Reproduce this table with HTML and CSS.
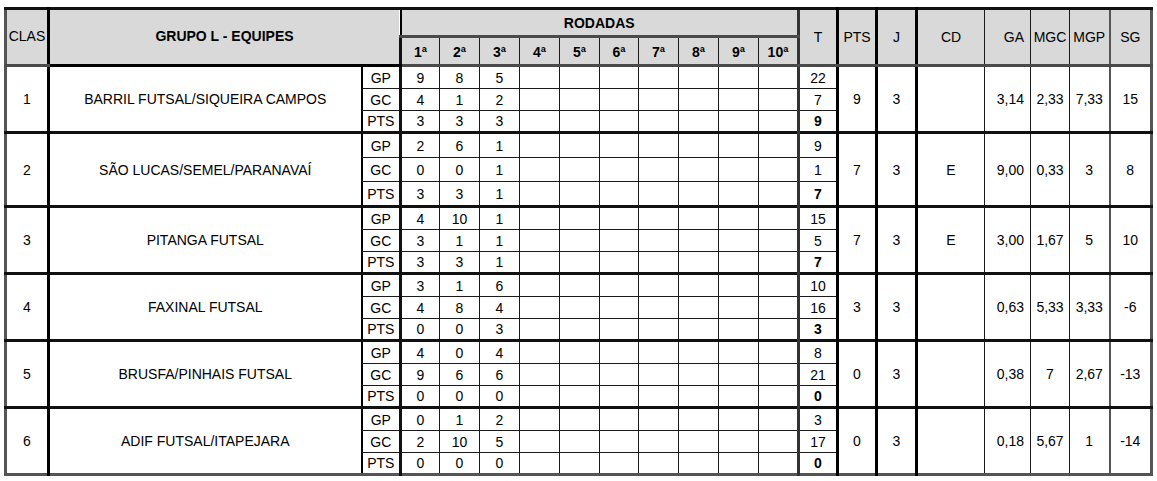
FILE: index.html
```html
<!DOCTYPE html>
<html lang="pt">
<head>
<meta charset="utf-8">
<title>Grupo L - Equipes</title>
<link rel="stylesheet" href="styles.css">
</head>
<body>
<table class="grid">
<colgroup>
<col class="w43"><col class="w313"><col class="w39">
<col class="w39"><col class="w40"><col class="w40"><col class="w40"><col class="w40"><col class="w39"><col class="w40"><col class="w40"><col class="w40"><col class="w40">
<col class="w39"><col class="w39"><col class="w40"><col class="w68"><col class="w46"><col class="w39"><col class="w40"><col class="w42">
</colgroup>
<thead>
<tr class="h1">
<th rowspan="2" class="c-clas hn">CLAS</th>
<th rowspan="2" colspan="2" class="c-team">GRUPO L - EQUIPES</th>
<th colspan="10" class="c-rod">RODADAS</th>
<th rowspan="2" class="c-t hn">T</th>
<th rowspan="2" class="c-pts hn">PTS</th>
<th rowspan="2" class="c-j hn">J</th>
<th rowspan="2" class="c-cd hn">CD</th>
<th rowspan="2" class="c-ga hn">GA</th>
<th rowspan="2" class="c-mgc hn">MGC</th>
<th rowspan="2" class="c-mgp hn">MGP</th>
<th rowspan="2" class="c-sg hn">SG</th>
</tr>
<tr class="h2">
<th class="c-r1">1ª</th><th class="c-r">2ª</th><th class="c-r">3ª</th><th class="c-r">4ª</th><th class="c-r">5ª</th><th class="c-r">6ª</th><th class="c-r">7ª</th><th class="c-r">8ª</th><th class="c-r">9ª</th><th class="c-r">10ª</th>
</tr>
</thead>
<tbody>
<tr class="first ra">
<td rowspan="3" class="c-clas">1</td><td rowspan="3" class="c-team">BARRIL FUTSAL/SIQUEIRA CAMPOS</td>
<td class="c-lbl">GP</td><td class="c-r1">9</td><td class="c-r">8</td><td class="c-r">5</td><td class="c-r"></td><td class="c-r"></td><td class="c-r"></td><td class="c-r"></td><td class="c-r"></td><td class="c-r"></td><td class="c-r"></td>
<td class="c-t">22</td>
<td rowspan="3" class="c-pts">9</td><td rowspan="3" class="c-j">3</td><td rowspan="3" class="c-cd"></td><td rowspan="3" class="c-ga">3,14</td><td rowspan="3" class="c-mgc">2,33</td><td rowspan="3" class="c-mgp">7,33</td><td rowspan="3" class="c-sg">15</td>
</tr>
<tr class="rb"><td class="c-lbl">GC</td><td class="c-r1">4</td><td class="c-r">1</td><td class="c-r">2</td><td class="c-r"></td><td class="c-r"></td><td class="c-r"></td><td class="c-r"></td><td class="c-r"></td><td class="c-r"></td><td class="c-r"></td><td class="c-t">7</td></tr>
<tr class="rc"><td class="c-lbl">PTS</td><td class="c-r1">3</td><td class="c-r">3</td><td class="c-r">3</td><td class="c-r"></td><td class="c-r"></td><td class="c-r"></td><td class="c-r"></td><td class="c-r"></td><td class="c-r"></td><td class="c-r"></td><td class="c-t tot">9</td></tr>

<tr class="first ta">
<td rowspan="3" class="c-clas">2</td><td rowspan="3" class="c-team">SÃO LUCAS/SEMEL/PARANAVAÍ</td>
<td class="c-lbl">GP</td><td class="c-r1">2</td><td class="c-r">6</td><td class="c-r">1</td><td class="c-r"></td><td class="c-r"></td><td class="c-r"></td><td class="c-r"></td><td class="c-r"></td><td class="c-r"></td><td class="c-r"></td>
<td class="c-t">9</td>
<td rowspan="3" class="c-pts">7</td><td rowspan="3" class="c-j">3</td><td rowspan="3" class="c-cd">E</td><td rowspan="3" class="c-ga">9,00</td><td rowspan="3" class="c-mgc">0,33</td><td rowspan="3" class="c-mgp">3</td><td rowspan="3" class="c-sg">8</td>
</tr>
<tr class="tb"><td class="c-lbl">GC</td><td class="c-r1">0</td><td class="c-r">0</td><td class="c-r">1</td><td class="c-r"></td><td class="c-r"></td><td class="c-r"></td><td class="c-r"></td><td class="c-r"></td><td class="c-r"></td><td class="c-r"></td><td class="c-t">1</td></tr>
<tr class="tc"><td class="c-lbl">PTS</td><td class="c-r1">3</td><td class="c-r">3</td><td class="c-r">1</td><td class="c-r"></td><td class="c-r"></td><td class="c-r"></td><td class="c-r"></td><td class="c-r"></td><td class="c-r"></td><td class="c-r"></td><td class="c-t tot">7</td></tr>

<tr class="first ra">
<td rowspan="3" class="c-clas">3</td><td rowspan="3" class="c-team">PITANGA FUTSAL</td>
<td class="c-lbl">GP</td><td class="c-r1">4</td><td class="c-r">10</td><td class="c-r">1</td><td class="c-r"></td><td class="c-r"></td><td class="c-r"></td><td class="c-r"></td><td class="c-r"></td><td class="c-r"></td><td class="c-r"></td>
<td class="c-t">15</td>
<td rowspan="3" class="c-pts">7</td><td rowspan="3" class="c-j">3</td><td rowspan="3" class="c-cd">E</td><td rowspan="3" class="c-ga">3,00</td><td rowspan="3" class="c-mgc">1,67</td><td rowspan="3" class="c-mgp">5</td><td rowspan="3" class="c-sg">10</td>
</tr>
<tr class="rb"><td class="c-lbl">GC</td><td class="c-r1">3</td><td class="c-r">1</td><td class="c-r">1</td><td class="c-r"></td><td class="c-r"></td><td class="c-r"></td><td class="c-r"></td><td class="c-r"></td><td class="c-r"></td><td class="c-r"></td><td class="c-t">5</td></tr>
<tr class="rc"><td class="c-lbl">PTS</td><td class="c-r1">3</td><td class="c-r">3</td><td class="c-r">1</td><td class="c-r"></td><td class="c-r"></td><td class="c-r"></td><td class="c-r"></td><td class="c-r"></td><td class="c-r"></td><td class="c-r"></td><td class="c-t tot">7</td></tr>

<tr class="first ra">
<td rowspan="3" class="c-clas">4</td><td rowspan="3" class="c-team">FAXINAL FUTSAL</td>
<td class="c-lbl">GP</td><td class="c-r1">3</td><td class="c-r">1</td><td class="c-r">6</td><td class="c-r"></td><td class="c-r"></td><td class="c-r"></td><td class="c-r"></td><td class="c-r"></td><td class="c-r"></td><td class="c-r"></td>
<td class="c-t">10</td>
<td rowspan="3" class="c-pts">3</td><td rowspan="3" class="c-j">3</td><td rowspan="3" class="c-cd"></td><td rowspan="3" class="c-ga">0,63</td><td rowspan="3" class="c-mgc">5,33</td><td rowspan="3" class="c-mgp">3,33</td><td rowspan="3" class="c-sg">-6</td>
</tr>
<tr class="rb"><td class="c-lbl">GC</td><td class="c-r1">4</td><td class="c-r">8</td><td class="c-r">4</td><td class="c-r"></td><td class="c-r"></td><td class="c-r"></td><td class="c-r"></td><td class="c-r"></td><td class="c-r"></td><td class="c-r"></td><td class="c-t">16</td></tr>
<tr class="rc"><td class="c-lbl">PTS</td><td class="c-r1">0</td><td class="c-r">0</td><td class="c-r">3</td><td class="c-r"></td><td class="c-r"></td><td class="c-r"></td><td class="c-r"></td><td class="c-r"></td><td class="c-r"></td><td class="c-r"></td><td class="c-t tot">3</td></tr>

<tr class="first ra">
<td rowspan="3" class="c-clas">5</td><td rowspan="3" class="c-team">BRUSFA/PINHAIS FUTSAL</td>
<td class="c-lbl">GP</td><td class="c-r1">4</td><td class="c-r">0</td><td class="c-r">4</td><td class="c-r"></td><td class="c-r"></td><td class="c-r"></td><td class="c-r"></td><td class="c-r"></td><td class="c-r"></td><td class="c-r"></td>
<td class="c-t">8</td>
<td rowspan="3" class="c-pts">0</td><td rowspan="3" class="c-j">3</td><td rowspan="3" class="c-cd"></td><td rowspan="3" class="c-ga">0,38</td><td rowspan="3" class="c-mgc">7</td><td rowspan="3" class="c-mgp">2,67</td><td rowspan="3" class="c-sg">-13</td>
</tr>
<tr class="rb"><td class="c-lbl">GC</td><td class="c-r1">9</td><td class="c-r">6</td><td class="c-r">6</td><td class="c-r"></td><td class="c-r"></td><td class="c-r"></td><td class="c-r"></td><td class="c-r"></td><td class="c-r"></td><td class="c-r"></td><td class="c-t">21</td></tr>
<tr class="rc"><td class="c-lbl">PTS</td><td class="c-r1">0</td><td class="c-r">0</td><td class="c-r">0</td><td class="c-r"></td><td class="c-r"></td><td class="c-r"></td><td class="c-r"></td><td class="c-r"></td><td class="c-r"></td><td class="c-r"></td><td class="c-t tot">0</td></tr>

<tr class="first ra">
<td rowspan="3" class="c-clas">6</td><td rowspan="3" class="c-team">ADIF FUTSAL/ITAPEJARA</td>
<td class="c-lbl">GP</td><td class="c-r1">0</td><td class="c-r">1</td><td class="c-r">2</td><td class="c-r"></td><td class="c-r"></td><td class="c-r"></td><td class="c-r"></td><td class="c-r"></td><td class="c-r"></td><td class="c-r"></td>
<td class="c-t">3</td>
<td rowspan="3" class="c-pts">0</td><td rowspan="3" class="c-j">3</td><td rowspan="3" class="c-cd"></td><td rowspan="3" class="c-ga">0,18</td><td rowspan="3" class="c-mgc">5,67</td><td rowspan="3" class="c-mgp">1</td><td rowspan="3" class="c-sg">-14</td>
</tr>
<tr class="rb"><td class="c-lbl">GC</td><td class="c-r1">2</td><td class="c-r">10</td><td class="c-r">5</td><td class="c-r"></td><td class="c-r"></td><td class="c-r"></td><td class="c-r"></td><td class="c-r"></td><td class="c-r"></td><td class="c-r"></td><td class="c-t">17</td></tr>
<tr class="rc"><td class="c-lbl">PTS</td><td class="c-r1">0</td><td class="c-r">0</td><td class="c-r">0</td><td class="c-r"></td><td class="c-r"></td><td class="c-r"></td><td class="c-r"></td><td class="c-r"></td><td class="c-r"></td><td class="c-r"></td><td class="c-t tot">0</td></tr>
</tbody>
</table>
</body>
</html>
```
FILE: styles.css
```css
html, body {
  margin: 0;
  padding: 0;
  background: #ffffff;
}
body {
  padding: 7px 0 0 4px;
  font-family: "Liberation Sans", Arial, sans-serif;
  font-size: 14px;
  color: #000;
}
.grid {
  border-collapse: collapse;
  table-layout: fixed;
  width: 1146px;
  border: 3px solid #555;
}
.w39 { width: 39px; }
.w40 { width: 40px; }
.w42 { width: 42px; }
.w43 { width: 43px; }
.w46 { width: 46px; }
.w68 { width: 68px; }
.w313 { width: 313px; }

th, td {
  padding: 0;
  text-align: center;
  vertical-align: middle;
  border: 1px solid #1a1a1a;
  line-height: 16px;
  white-space: nowrap;
  overflow: hidden;
}
thead th {
  background: #d9d9d9;
  font-weight: bold;
}
thead th.hn { font-weight: normal; }
thead tr.h1 th { border-top: 3px solid #111; }
.h1 { height: 28px; }
.h2 { height: 29px; }
thead th { border-bottom: 3px solid #4a4a4a; }
.c-rod { border-bottom: 3px solid #4a4a4a; }
thead .c-team { border-bottom: 3px solid #000; padding-bottom: 3px; }
thead .c-clas { padding-bottom: 3px; }
thead .h2 th { padding-top: 2px; }

tbody tr.ra { height: 23px; }
tbody tr.rb { height: 22px; }
tbody tr.rc { height: 22px; }
tbody tr.ta { height: 25px; }
tbody tr.tb { height: 24px; }
tbody tr.tc { height: 25px; }
tbody tr.first td { border-top: 3px solid #111; }

.c-clas { border-right: 3px solid #000; }
.c-team { border-right: 2px solid #000; }
.c-r1 { border-left: 3px solid #111; }
.c-t { border-left: 3px solid #333; border-right: 3px solid #000; }
.c-pts { border-right: 3px solid #000; }
.c-j { border-right: 3px solid #000; }
.c-ga { text-align: right; padding-right: 6px; }
.c-sg { border-left: 2px solid #555; }
.tot { font-weight: bold; }
```
